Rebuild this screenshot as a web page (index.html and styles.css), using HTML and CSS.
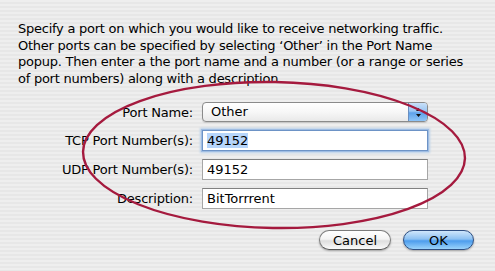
FILE: index.html
```html
<!DOCTYPE html>
<html lang="en">
<head>
    <meta charset="UTF-8">
    <title>Port settings</title>
    <link rel="stylesheet" href="styles.css">
</head>
<body>
    <div class="sheet">
        <p class="intro">Specify a port on which you would like to receive networking traffic.<br>Other ports can be specified by selecting ‘Other’ in the Port Name<br>popup. Then enter a the port name and a number (or a range or series<br>of port numbers) along with a description.</p>

        <div class="form">
            <label class="label">Port Name:</label>
            <div class="popup">
                <span class="popup-value">Other</span>
                <span class="popup-cap">
                    <svg width="7" height="11" viewBox="0 0 7 11"><path d="M3.5 1 L6 4 L1 4 Z M1 7 L6 7 L3.5 10 Z" fill="#111"/></svg>
                </span>
            </div>

            <label class="label">TCP Port Number(s):</label>
            <div class="field focused"><span class="sel">49152</span></div>

            <label class="label">UDP Port Number(s):</label>
            <div class="field">49152</div>

            <label class="label">Description:</label>
            <div class="field">BitTorrrent</div>
        </div>

        <div class="buttons">
            <button class="btn">Cancel</button>
            <button class="btn default">OK</button>
        </div>
    </div>

    <svg class="mark" width="495" height="271" viewBox="0 0 495 271">
        <ellipse cx="274" cy="155" rx="191" ry="73" fill="none" stroke="#a51a3e" stroke-width="2.4" transform="rotate(1 274 155)"/>
    </svg>
</body>
</html>
```

FILE: styles.css
```css
* {
    margin: 0;
    padding: 0;
    box-sizing: border-box;
}
html, body {
    width: 495px;
    height: 271px;
    overflow: hidden;
}
body {
    position: relative;
    font-family: "DejaVu Sans", Verdana, sans-serif;
    font-size: 13px;
    color: #000;
    background: repeating-linear-gradient(to bottom, #eeeeee 0, #eeeeee 2px, #e7e7e7 2px, #e7e7e7 4px);
}
.sheet {
    padding: 21px 21px 0 18px;
}
.intro {
    line-height: 16.5px;
    white-space: nowrap;
    letter-spacing: -0.25px;
}
.form {
    display: grid;
    grid-template-columns: 175px 226px;
    column-gap: 9px;
    row-gap: 8px;
    align-items: center;
    margin-top: 15px;
}
.label {
    text-align: right;
    white-space: nowrap;
    letter-spacing: -0.2px;
}
.popup {
    display: flex;
    height: 20px;
    border: 1px solid #8b8b8b;
    border-radius: 4px;
    background: linear-gradient(#ffffff, #f7f7f7 50%, #e9e9e9);
    box-shadow: 0 1px 1px rgba(0,0,0,0.15);
    overflow: hidden;
}
.popup-value {
    flex: 1;
    padding-left: 8px;
    line-height: 18px;
}
.popup-cap {
    width: 19px;
    display: flex;
    align-items: center;
    justify-content: center;
    border-left: 1px solid #6a8fc0;
    background: linear-gradient(#c9e0f8, #9cc6f3 45%, #5ea1ea 55%, #8fc5f7);
}
.field {
    height: 21px;
    padding-left: 4px;
    line-height: 20px;
    background: #fff;
    border: 1px solid #a6a6a6;
    border-top-color: #808080;
}
.field.focused {
    border-color: #6d93c6;
    box-shadow: 0 0 0 1px #9fbde3, 0 0 2px 2px #b8cfe9;
}
.sel {
    background: #b6d5fb;
}
.buttons {
    display: flex;
    justify-content: flex-end;
    gap: 12px;
    margin-top: 21px;
}
.btn {
    width: 72px;
    height: 20px;
    border-radius: 10px;
    font-family: inherit;
    font-size: 13px;
    color: #000;
    border: 1px solid #7c7c7c;
    border-bottom-color: #555;
    background: linear-gradient(#ffffff, #f4f4f4 45%, #dedede 55%, #fafafa);
    box-shadow: 0 1px 2px rgba(0,0,0,0.3);
}
.btn.default {
    width: 71px;
    border-color: #2f4f82;
    background: linear-gradient(#cfe6fb, #8cc1f2 45%, #4d9ded 55%, #9ad3fb);
}
.mark {
    position: absolute;
    left: 0;
    top: 0;
    pointer-events: none;
}
```
